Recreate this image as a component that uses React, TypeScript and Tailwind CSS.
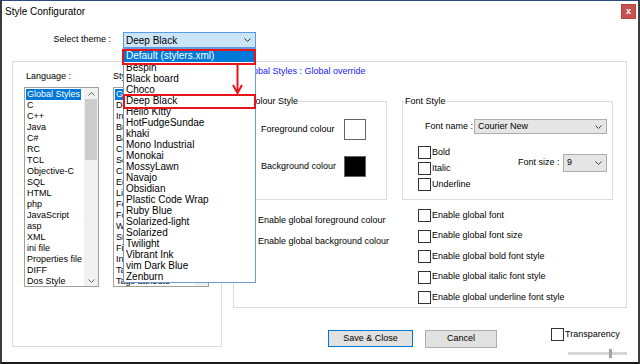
import React from 'react';

const LANGUAGES = [
  'Global Styles', 'C', 'C++', 'Java', 'C#', 'RC', 'TCL', 'Objective-C', 'SQL',
  'HTML', 'php', 'JavaScript', 'asp', 'XML', 'ini file', 'Properties file', 'DIFF', 'Dos Style',
];

const STYLES = [
  'Global override', 'Default Style', 'Indent guideline style', 'Brace highlight style',
  'Bad brace colour', 'Current line background colour', 'Selected text colour', 'Caret colour',
  'Edge colour', 'Line number margin', 'Fold', 'Fold active', 'White space symbol',
  'Smart HighLighting', 'Find Mark Style', 'Incremental highlight all',
  'Tags match highlighting', 'Tags attribute',
];

const THEMES = [
  'Bespin', 'Black board', 'Choco', 'Deep Black', 'Hello Kitty', 'HotFudgeSundae', 'khaki',
  'Mono Industrial', 'Monokai', 'MossyLawn', 'Navajo', 'Obsidian', 'Plastic Code Wrap',
  'Ruby Blue', 'Solarized-light', 'Solarized', 'Twilight', 'Vibrant Ink', 'vim Dark Blue', 'Zenburn',
];

const Chevron = ({ up = false, color = '#606060' }: { up?: boolean; color?: string }) => (
  <svg width="7" height="4" viewBox="0 0 7 4" className="shrink-0">
    <polyline
      points={up ? '0.5,3.5 3.5,0.5 6.5,3.5' : '0.5,0.5 3.5,3.5 6.5,0.5'}
      fill="none"
      stroke={color}
      strokeWidth="1"
    />
  </svg>
);

const CheckBox = () => <span className="w-[13px] h-[13px] shrink-0 border border-[#333] bg-white" />;

const CheckRow = ({ label, gap = 'gap-[1px]' }: { label: string; gap?: string }) => (
  <div className={`flex items-center h-[13px] whitespace-nowrap ${gap}`}>
    <CheckBox />
    <span>{label}</span>
  </div>
);

const ScrollBar = () => (
  <div className="w-[14px] h-full shrink-0 flex flex-col bg-[#f0f0f0]">
    <div className="h-[11px] flex items-center justify-center">
      <Chevron up />
    </div>
    <div className="h-[61px] mx-[1px] bg-[#cdcdcd]" />
    <div className="flex-1" />
    <div className="h-[11px] flex items-center justify-center">
      <Chevron />
    </div>
  </div>
);

const ListBox = ({ items, width }: { items: string[]; width: string }) => (
  <div className={`flex h-[200px] border border-[#a0a0a0] bg-white ${width}`}>
    <div className="flex-1 min-w-0 overflow-hidden pt-[1px] pl-[1px]">
      {items.map((item, i) => (
        <div key={item} className="h-[11px] leading-[11px] whitespace-nowrap">
          <span
            className={
              i === 0
                ? 'inline-block h-[11px] px-[1px] bg-[#0078d7] text-white'
                : 'inline-block h-[11px] px-[1px]'
            }
          >
            {item}
          </span>
        </div>
      ))}
    </div>
    <ScrollBar />
  </div>
);

export default function App() {
  return (
    <div className="relative w-[640px] h-[364px] overflow-hidden flex flex-col bg-white text-black text-[9px] whitespace-nowrap font-['Liberation_Sans',Arial,sans-serif] border-t border-t-[#2a4a7f] border-x-2 border-x-[#3c3c3c] border-b-2 border-b-[#1c1c1c]">
      {/* Title bar */}
      <div className="h-[31px] flex items-start justify-between pt-[3px] pl-[3px] pr-[2px]">
        <span className="text-[10px] leading-[16px]">Style Configurator</span>
        <div className="w-[15px] h-[15px] bg-[#c75050] border border-[#b84444] flex items-center justify-center text-white text-[9px] font-bold leading-none">
          x
        </div>
      </div>

      {/* Theme select */}
      <div className="h-[16px] flex items-center">
        <span className="w-[109px] text-right">Select theme :</span>
        <div className="ml-[12px] w-[133px] h-[16px] flex items-center justify-between pl-[2px] pr-[4px] border border-[#569de5] bg-[#cce4f7] text-[10px]">
          <span>Deep Black</span>
          <Chevron color="#333" />
        </div>
      </div>

      <div className="mt-[13px] flex pl-[10px]">
        {/* Language / style lists */}
        <div className="w-[210px] h-[286px] border border-[#dcdcdc] pt-[8px] pl-[11px]">
          <div className="flex gap-[14px]">
            <div className="flex flex-col">
              <span className="h-[12px] leading-[12px] pl-[2px]">Language :</span>
              <div className="mt-[5px]">
                <ListBox items={LANGUAGES} width="w-[75px]" />
              </div>
            </div>
            <div className="flex flex-col">
              <span className="h-[12px] leading-[12px]">Style :</span>
              <div className="mt-[5px]">
                <ListBox items={STYLES} width="w-[96px]" />
              </div>
            </div>
          </div>
        </div>

        {/* Right column */}
        <div className="ml-[11px] w-[394px] flex flex-col">
          <div className="h-[247px] border border-[#dcdcdc] pt-[3px]">
            <div className="pl-[10px] h-[12px] leading-[12px] text-[#1a1aff]">Global Styles : Global override</div>

            <div className="mt-[18px] flex pl-[12px]">
              <fieldset className="w-[141px] h-[105px] border border-[#dcdcdc]">
                <legend className="ml-[1px] px-[1px] leading-[12px]">Colour Style</legend>
                <div className="mt-[12px] pl-[14px] h-[21px] flex items-center">
                  <span className="w-[83px]">Foreground colour</span>
                  <span className="w-[22px] h-[21px] border border-[#646464] bg-white" />
                </div>
                <div className="mt-[16px] pl-[14px] h-[21px] flex items-center">
                  <span className="w-[83px]">Background colour</span>
                  <span className="w-[22px] h-[21px] border border-[#646464] bg-black" />
                </div>
              </fieldset>

              <fieldset className="ml-[15px] w-[211px] h-[105px] border border-[#dcdcdc]">
                <legend className="ml-[1px] px-[1px] leading-[12px]">Font Style</legend>
                <div className="mt-[12px] pl-[22px] h-[15px] flex items-center">
                  <span className="w-[49px]">Font name :</span>
                  <div className="w-[133px] h-[15px] flex items-center justify-between pl-[3px] pr-[4px] border border-[#adadad] bg-[#e5e5e5]">
                    <span>Courier New</span>
                    <Chevron color="#444" />
                  </div>
                </div>
                <div className="mt-[12px] flex pl-[15px] pr-[5px]">
                  <div className="flex flex-col gap-[3px]">
                    <CheckRow label="Bold" />
                    <CheckRow label="Italic" />
                    <CheckRow label="Underline" />
                  </div>
                  <div className="ml-auto mt-[8px] h-[18px] flex items-center">
                    <span className="w-[45px]">Font size :</span>
                    <div className="w-[44px] h-[18px] flex items-center justify-between pl-[3px] pr-[4px] border border-[#adadad] bg-[#e5e5e5]">
                      <span>9</span>
                      <Chevron color="#444" />
                    </div>
                  </div>
                </div>
              </fieldset>
            </div>

            <div className="flex">
              <div className="w-[168px] pl-[9px] pt-[14px] flex flex-col gap-[8px]">
                <CheckRow label="Enable global foreground colour" gap="gap-[2px]" />
                <CheckRow label="Enable global background colour" gap="gap-[2px]" />
              </div>
              <div className="pl-[16px] pt-[9px] flex flex-col gap-[7.5px]">
                <CheckRow label="Enable global font" />
                <CheckRow label="Enable global font size" />
                <CheckRow label="Enable global bold font style" />
                <CheckRow label="Enable global italic font style" />
                <CheckRow label="Enable global underline font style" />
              </div>
            </div>
          </div>

          {/* Buttons */}
          <div className="mt-[22px] flex items-start pl-[95px]">
            <div className="w-[85px] h-[17px] flex items-center justify-center border border-[#0078d7] bg-[#e1e1e1]">
              Save &amp; Close
            </div>
            <div className="ml-[12px] w-[72px] h-[18px] flex items-center justify-center border border-[#adadad] bg-[#e1e1e1]">
              Cancel
            </div>
            <div className="ml-[54px] -mt-[2px] flex flex-col">
              <CheckRow label="Transparency" />
              <div className="relative mt-[11px] ml-[17px] w-[59px] h-[3px] bg-[#d6d6d6]">
                <span className="absolute left-[41px] -top-[3px] w-[3px] h-[9px] bg-[#a3a3a3]" />
              </div>
            </div>
          </div>
        </div>
      </div>

      {/* Open theme dropdown */}
      <div className="absolute left-[121px] top-[47px] w-[133px] h-[235px] border border-[#6e9bd8] bg-white text-[10px]">
        <div className="h-[13px] leading-[13px] pl-[2px] bg-[#0078d7] text-white">
          Default (stylers.xml)
        </div>
        {THEMES.map((theme) => (
          <div key={theme} className="h-[11px] leading-[11px] pl-[2px]">
            {theme}
          </div>
        ))}
      </div>

      {/* Red annotations */}
      <div className="absolute left-[120px] top-[48px] w-[134px] h-[16px] border-2 border-[#e8141c]" />
      <div className="absolute left-[121px] top-[93px] w-[133px] h-[15px] border-2 border-[#e8141c]" />
      <svg className="absolute left-[228px] top-[61px]" width="16" height="34" viewBox="0 0 16 34">
        <line x1="7.5" y1="2" x2="7.5" y2="30" stroke="#e8141c" strokeWidth="2" />
        <polyline points="3,23 7.5,31 12,23" fill="none" stroke="#e8141c" strokeWidth="2" />
      </svg>
    </div>
  );
}
